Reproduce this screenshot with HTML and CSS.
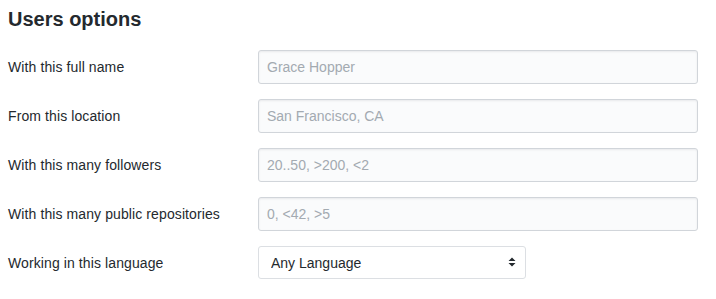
FILE: index.html
```html
<!DOCTYPE html>
<html lang="en">
<head>
    <meta charset="UTF-8">
    <meta name="viewport" content="width=device-width, initial-scale=1.0">
    <title>Advanced search - Users options</title>
    <link rel="stylesheet" href="styles.css">
</head>
<body>
    <div class="search-section">
        <h3 class="section-title">Users options</h3>

        <!-- Baris pilihan pengguna -->
        <div class="form-row">
            <label for="fullName">With this full name</label>
            <input type="text" id="fullName" class="form-control" placeholder="Grace Hopper">
        </div>
        <div class="form-row">
            <label for="location">From this location</label>
            <input type="text" id="location" class="form-control" placeholder="San Francisco, CA">
        </div>
        <div class="form-row">
            <label for="followers">With this many followers</label>
            <input type="text" id="followers" class="form-control" placeholder="20..50, >200, <2">
        </div>
        <div class="form-row">
            <label for="repos">With this many public repositories</label>
            <input type="text" id="repos" class="form-control" placeholder="0, <42, >5">
        </div>
        <div class="form-row">
            <label for="language">Working in this language</label>
            <span class="select-wrap">
                <select id="language" class="form-select">
                    <option>Any Language</option>
                    <option>JavaScript</option>
                    <option>Python</option>
                    <option>Ruby</option>
                </select>
                <svg class="select-arrow" width="8" height="10" viewBox="0 0 8 10">
                    <path d="M4 0.5 L7.5 4 L0.5 4 Z M0.5 6 L7.5 6 L4 9.5 Z" fill="#24292e"/>
                </svg>
            </span>
        </div>
    </div>
</body>
</html>
```

FILE: styles.css
```css
body {
    font-family: "Liberation Sans", Arial, sans-serif;
    font-size: 14px;
    color: #24292e;
    background-color: #fff;
    margin: 0;
    padding: 4px 8px;
}

.section-title {
    margin: 0 0 16px;
    font-size: 20px;
    line-height: 30px;
    font-weight: bold;
}

/* Gaya baris borang */
.form-row {
    display: grid;
    grid-template-columns: 250px 440px;
    align-items: center;
    margin-bottom: 15px;
}

.form-row label {
    font-size: 14px;
    line-height: 20px;
    letter-spacing: 0.1px;
}

.form-control {
    box-sizing: border-box;
    height: 34px;
    width: 440px;
    padding: 6px 8px;
    font-family: inherit;
    font-size: 14px;
    color: #24292e;
    background-color: #fafbfc;
    border: 1px solid #d1d5da;
    border-radius: 3px;
    box-shadow: inset 0 1px 2px rgba(27, 31, 35, 0.075);
    outline: none;
}

.form-control::placeholder {
    color: #a3aab1;
}

.form-control:focus {
    border-color: #2188ff;
    background-color: #fff;
}

/* Gaya pilihan bahasa */
.select-wrap {
    position: relative;
    display: inline-block;
    width: 268px;
}

.form-select {
    box-sizing: border-box;
    width: 268px;
    height: 33px;
    padding: 0 24px 0 12px;
    font-family: inherit;
    font-size: 14px;
    color: #24292e;
    background-color: #fff;
    border: 1px solid #dcdfe3;
    border-radius: 3px;
    -webkit-appearance: none;
    appearance: none;
    outline: none;
}

.select-arrow {
    position: absolute;
    right: 10px;
    top: 11px;
    pointer-events: none;
}
```
